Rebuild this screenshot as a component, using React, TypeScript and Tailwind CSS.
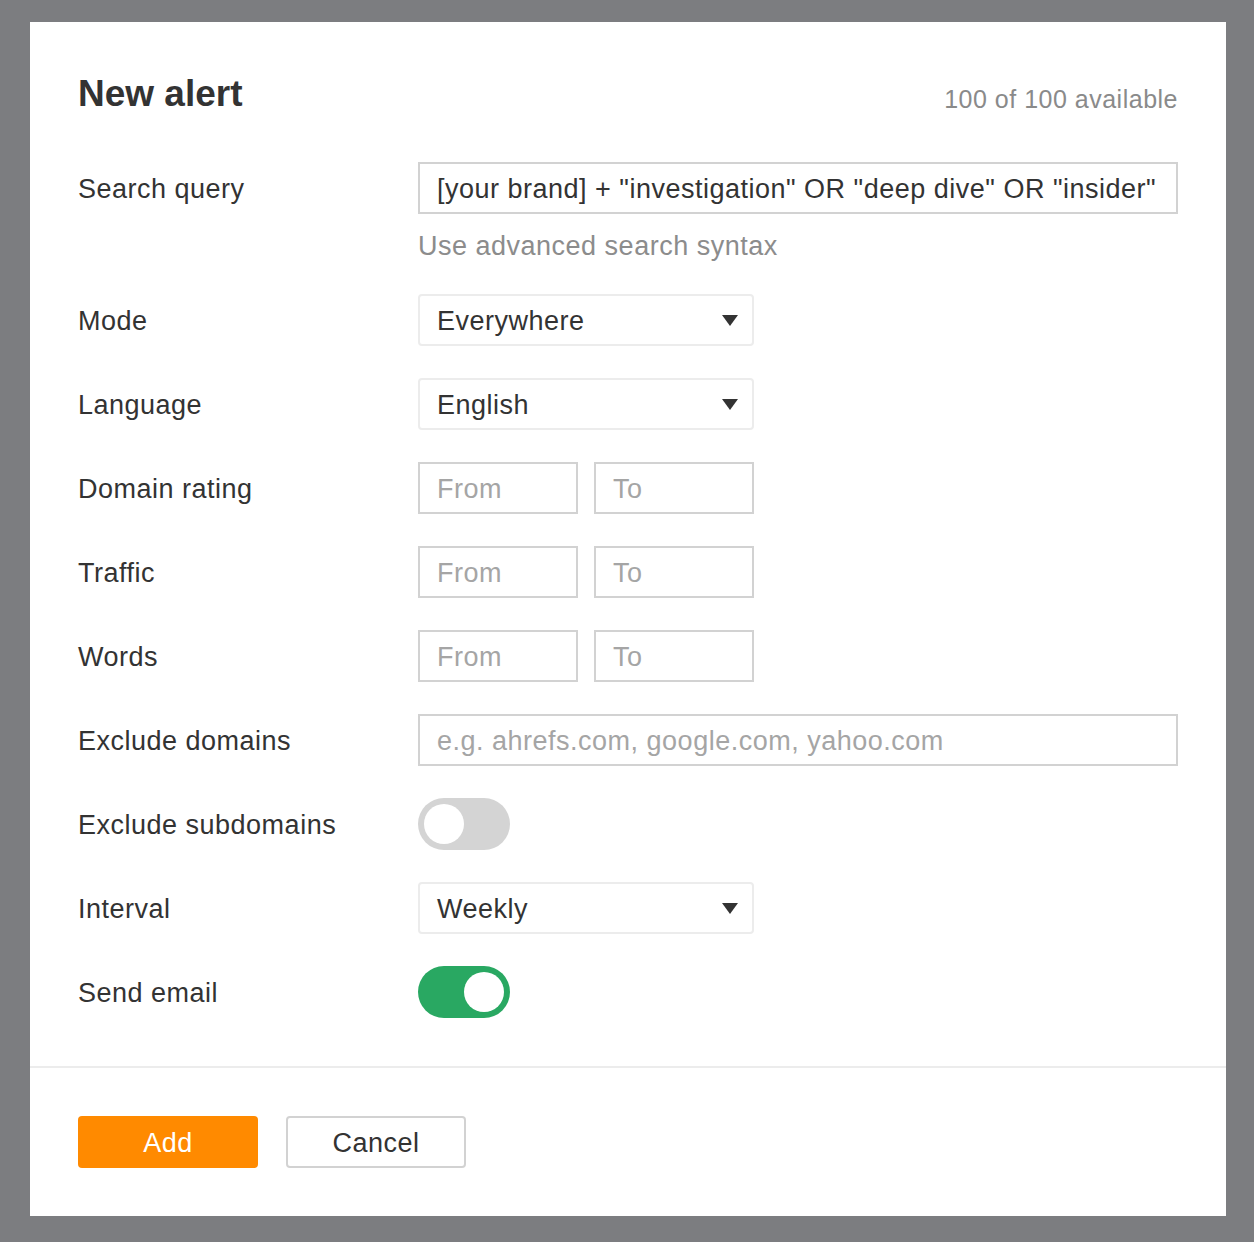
const font = { fontFamily: '"Liberation Sans", Arial, sans-serif' };

function Row({ label, children }: { label: string; children: React.ReactNode }) {
  return (
    <div className="flex items-start">
      <div className="w-[340px] shrink-0 h-[52px] pt-[3px] flex items-center text-[27px] tracking-[0.5px] text-[#333]">{label}</div>
      <div className="flex-1 min-w-0">{children}</div>
    </div>
  );
}

function Select({ value }: { value: string }) {
  return (
    <div className="w-[336px] h-[52px] border-2 border-[#ececec] rounded-[4px] flex items-center justify-between pl-[17px] pr-[14px] text-[27px] tracking-[0.5px] text-[#333]">
      <span className="pt-[3px]">{value}</span>
      <svg width="16" height="12" viewBox="0 0 16 12">
        <path d="M0 1h16L8 12z" fill="#333" />
      </svg>
    </div>
  );
}

function Input({ placeholder, value, className }: { placeholder?: string; value?: string; className: string }) {
  return (
    <div
      className={`h-[52px] border-2 border-[#d2d2d2] flex items-center pl-[17px] pt-[3px] text-[27px] tracking-[0.5px] overflow-hidden whitespace-nowrap ${className} ${
        value ? 'text-[#333]' : 'text-[#a5a5a5]'
      }`}
    >
      {value ?? placeholder}
    </div>
  );
}

function Range() {
  return (
    <div className="flex gap-4">
      <Input placeholder="From" className="w-[160px]" />
      <Input placeholder="To" className="w-[160px]" />
    </div>
  );
}

function Toggle({ on }: { on?: boolean }) {
  return (
    <div
      className={`w-[92px] h-[52px] rounded-full p-[6px] flex ${
        on ? 'bg-[#29a862] justify-end' : 'bg-[#d4d4d4] justify-start'
      }`}
    >
      <div className="w-[40px] h-[40px] rounded-full bg-white" />
    </div>
  );
}

export default function App() {
  return (
    <div className="min-h-[1242px] bg-[#7c7d80] pt-[22px] pl-[30px]" style={font}>
      <div className="w-[1196px] bg-white">
        <div className="px-12 pt-[52px] pb-12">
          <div className="flex items-center justify-between h-10">
            <h1 className="text-[37px] font-bold text-[#333] leading-10">New alert</h1>
            <span className="text-[25px] tracking-[0.5px] text-[#8a8a8a] mt-3">100 of 100 available</span>
          </div>

          <div className="mt-12 flex flex-col gap-8">
            <Row label="Search query">
              <Input value={'[your brand] + "investigation" OR "deep dive" OR "insider"'} className="w-full" />
              <div className="mt-4 leading-8 text-[27px] tracking-[0.5px] text-[#8c8c8c]">Use advanced search syntax</div>
            </Row>
            <Row label="Mode">
              <Select value="Everywhere" />
            </Row>
            <Row label="Language">
              <Select value="English" />
            </Row>
            <Row label="Domain rating">
              <Range />
            </Row>
            <Row label="Traffic">
              <Range />
            </Row>
            <Row label="Words">
              <Range />
            </Row>
            <Row label="Exclude domains">
              <Input placeholder="e.g. ahrefs.com, google.com, yahoo.com" className="w-full" />
            </Row>
            <Row label="Exclude subdomains">
              <Toggle />
            </Row>
            <Row label="Interval">
              <Select value="Weekly" />
            </Row>
            <Row label="Send email">
              <Toggle on />
            </Row>
          </div>
        </div>

        <div className="border-t-2 border-[#ececec] px-12 pt-[48px] pb-12 flex gap-7">
          <button className="w-[180px] h-[52px] pt-[3px] rounded-[4px] bg-[#ff8a00] text-white text-[27px] tracking-[0.5px]">Add</button>
          <button className="w-[180px] h-[52px] pt-[3px] rounded-[4px] border-2 border-[#d2d2d2] bg-white text-[#333] text-[27px] tracking-[0.5px]">
            Cancel
          </button>
        </div>
      </div>
    </div>
  );
}
